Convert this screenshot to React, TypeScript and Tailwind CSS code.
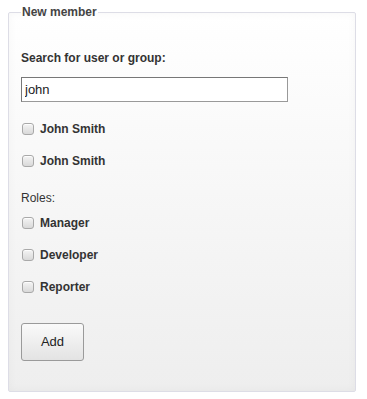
import React, { useState } from 'react';

const users = ['John Smith', 'John Smith'];
const roles = ['Manager', 'Developer', 'Reporter'];

function CheckRow({ label }: { label: string }) {
  return (
    <label className="flex h-[32px] items-center gap-[6px] cursor-pointer">
      <input
        type="checkbox"
        className="ml-[1px] h-[12px] w-[12px] appearance-none rounded-[3px] border border-[#a9a9a9] bg-gradient-to-b from-[#f4f4f4] to-[#d9d9d9] shadow-[inset_0_1px_0_rgba(255,255,255,0.8)] checked:bg-[#8ab]"
      />
      <span className="text-[12px] font-bold text-[#333]">{label}</span>
    </label>
  );
}

export default function App() {
  const [query, setQuery] = useState('john');

  return (
    <div className="h-[399px] w-[367px] bg-white pl-2 pt-[5px] font-['Liberation_Sans',Arial,sans-serif]">
      <fieldset className="h-[387px] w-[348px] rounded-[2px] border border-[#dddde6] bg-gradient-to-b from-white to-[#eeeeee] px-3 pt-[32px] shadow-[inset_0_0_8px_rgba(0,0,0,0.04)]">
        <legend className="px-px text-[12px] font-bold leading-[14px] text-[#444]">New member</legend>

        {/* search */}
        <div className="text-[12px] font-bold leading-[14px] text-[#333]">Search for user or group:</div>
        <input
          type="text"
          value={query}
          onChange={(e) => setQuery(e.target.value)}
          className="mt-[12px] block h-[25px] w-[267px] border border-[#999] border-t-[#777] border-l-[#777] bg-white pl-[3px] text-[13px] text-[#222] focus:outline-none"
        />

        <div className="mt-[11px]">
          {users.map((u, i) => (
            <CheckRow key={i} label={u} />
          ))}
        </div>

        {/* roles */}
        <div className="mt-[14px] text-[12px] leading-[14px] text-[#333]">Roles:</div>
        <div className="mt-[2px]">
          {roles.map((r) => (
            <CheckRow key={r} label={r} />
          ))}
        </div>

        <button
          type="button"
          className="mt-[20px] h-[38px] w-[63px] rounded-[3px] border border-[#9a9a9a] bg-gradient-to-b from-[#fafafa] to-[#e3e3e3] text-[13px] text-[#222]"
        >
          Add
        </button>
      </fieldset>
    </div>
  );
}
